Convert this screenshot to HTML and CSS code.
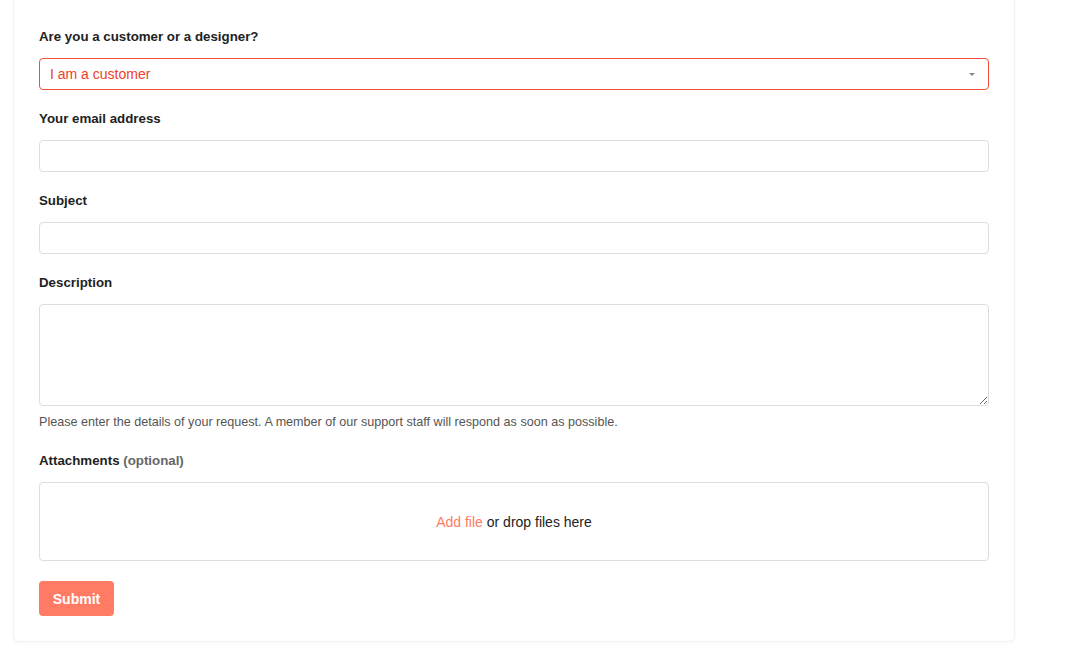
FILE: index.html
```html
<!DOCTYPE html>
<html lang="en">
<head>
<meta charset="utf-8">
<title>Submit a request</title>
<link rel="stylesheet" href="styles.css">
</head>
<body>
<div class="card">
  <form class="form">
    <div class="field">
      <label class="label">Are you a customer or a designer?</label>
      <div class="select">
        <span class="select-value">I am a customer</span>
        <span class="caret"></span>
      </div>
    </div>
    <div class="field">
      <label class="label">Your email address</label>
      <input class="input" type="text">
    </div>
    <div class="field">
      <label class="label">Subject</label>
      <input class="input" type="text">
    </div>
    <div class="field field-desc">
      <label class="label">Description</label>
      <textarea class="textarea"></textarea>
      <p class="hint">Please enter the details of your request. A member of our support staff will respond as soon as possible.</p>
    </div>
    <div class="field">
      <label class="label">Attachments <span class="optional">(optional)</span></label>
      <div class="dropzone"><span class="add">Add file</span>&nbsp;or drop files here</div>
    </div>
    <button class="submit" type="button">Submit</button>
  </form>
</div>
</body>
</html>
```

FILE: styles.css
```css
* { box-sizing: border-box; }
html, body { margin: 0; padding: 0; background: #fff; }
body {
  font-family: "Liberation Sans", Arial, sans-serif;
  color: #222;
  width: 1075px;
  height: 655px;
  overflow: hidden;
}
.card {
  margin: -12px 0 0 13px;
  width: 1002px;
  padding: 39px 25px 25px;
  background: #fff;
  border: 1px solid #f3f3f3;
  border-radius: 6px;
  box-shadow: 0 1px 3px rgba(0,0,0,0.04);
}
.form { display: flex; flex-direction: column; }
.field { display: flex; flex-direction: column; margin-bottom: 20px; }
.label {
  font-size: 13.3px;
  font-weight: bold;
  line-height: 18px;
  margin-bottom: 12px;
  color: #222;
}
.optional { color: #666; }
.select {
  height: 32px;
  border: 1px solid #f04e3a;
  border-radius: 4px;
  display: flex;
  align-items: center;
  justify-content: space-between;
  padding: 0 13px 0 10px;
}
.select-value { color: #f0402a; font-size: 14px; }
.caret {
  width: 0; height: 0;
  border-left: 3px solid transparent;
  border-right: 3px solid transparent;
  border-top: 3px solid #888;
}
.input {
  height: 32px;
  border: 1px solid #ddd;
  border-radius: 4px;
  font: inherit;
  margin: 0;
}
.textarea {
  height: 102px;
  border: 1px solid #ddd;
  border-radius: 4px;
  resize: vertical;
  margin: 0;
  font: inherit;
  display: block;
}
.hint {
  margin: 8px 0 0;
  font-size: 12.6px;
  line-height: 16px;
  color: #555;
}
.field-desc { margin-bottom: 22px; }
.dropzone {
  height: 79px;
  border: 1px solid #ddd;
  border-radius: 4px;
  display: flex;
  align-items: center;
  justify-content: center;
  font-size: 14px;
  color: #222;
}
.add { color: #ff7b63; }
.submit {
  align-self: flex-start;
  width: 75px;
  height: 35px;
  background: #ff7b63;
  color: #fff;
  border: none;
  border-radius: 4px;
  font: bold 14px "Liberation Sans", Arial, sans-serif;
  padding: 0;
}
```
